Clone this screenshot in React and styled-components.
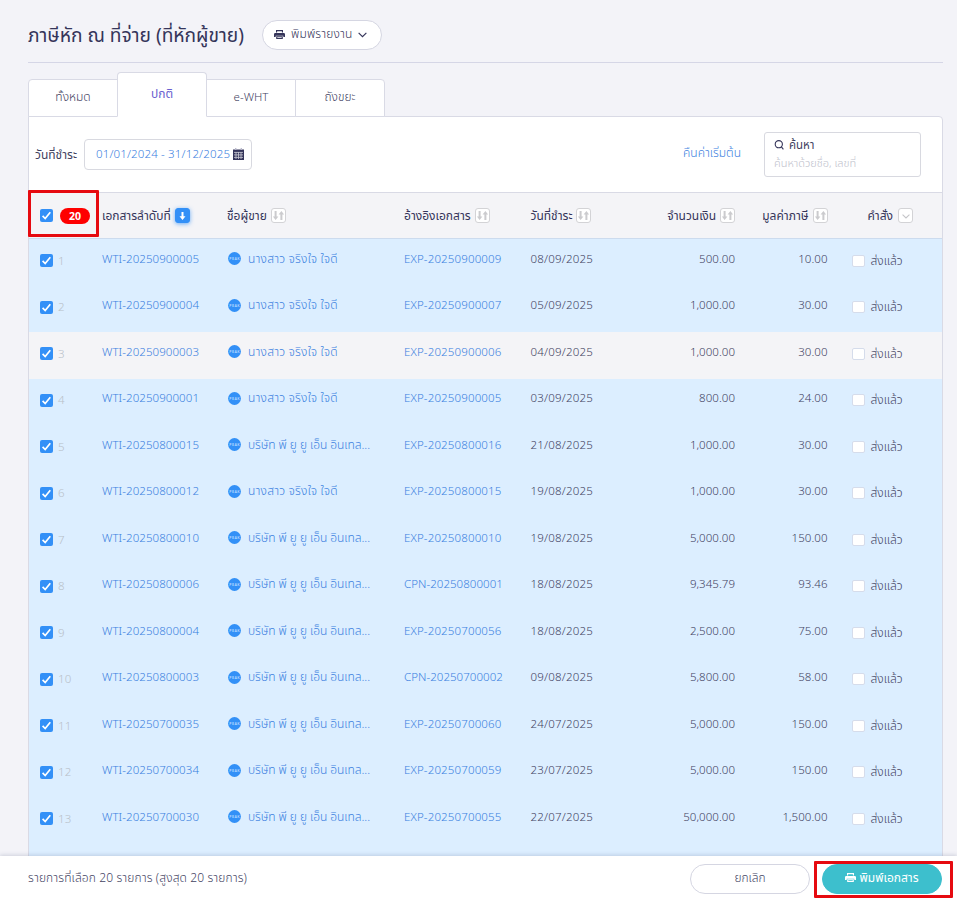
import React from 'react'
import styled, { createGlobalStyle } from 'styled-components'

const GlobalStyle = createGlobalStyle`
  * {
    box-sizing: border-box;
  }
  body {
    margin: 0;
    overflow: hidden;
    background: #f3f3f8;
    color: #42425f;
    font-family: 'Noto Sans', 'Noto Sans Thai', sans-serif;
    font-size: 12px;
    font-weight: 300;
  }
`

const Page = styled.div`
  position: relative;
  height: 898px;
  display: flex;
  flex-direction: column;
  overflow: hidden;
`

const Content = styled.main`
  flex: 1;
  min-height: 0;
  padding: 0 14px 0 28px;
  overflow: hidden;
`

const Header = styled.header`
  display: flex;
  align-items: center;
  gap: 18px;
  height: 63px;
  padding-top: 8px;
  border-bottom: 1px solid #d5d6e6;
`

const Title = styled.h1`
  width: 216px;
  margin: 0;
  font-size: 19.2px;
  font-weight: 400;
  line-height: 28px;
  white-space: nowrap;
  color: #35355a;
`

const Label = styled.span`
  flex: none;
  font-size: ${(p) => p.$size || 12}px;
  font-weight: ${(p) => p.$weight || 300};
  letter-spacing: ${(p) => p.$track || 0}px;
  color: ${(p) => p.$color || 'inherit'};
  line-height: 18px;
  white-space: nowrap;
`

const ReportButton = styled.button`
  display: flex;
  align-items: center;
  width: 120px;
  height: 30px;
  padding: 0 12px 2px 11px;
  gap: 6px;
  border: 1px solid #d5d6e2;
  border-radius: 15px;
  background: #fff;
  color: #35355a;
  font: inherit;
`

const Tabs = styled.nav`
  display: flex;
  align-items: flex-end;
  height: 54px;
  margin-bottom: -1px;
`

const Tab = styled.div`
  display: flex;
  align-items: center;
  justify-content: center;
  position: relative;
  width: 90px;
  height: ${(p) => (p.$active ? 45 : 38)}px;
  margin-left: ${(p) => (p.$first ? 0 : -1)}px;
  padding-bottom: 2px;
  border: 1px solid #d9dae5;
  border-bottom-color: ${(p) => (p.$active ? '#fff' : '#d9dae5')};
  border-radius: ${(p) => p.$radius || '0'};
  background: #fff;
  color: ${(p) => (p.$active ? '#6a5fd0' : '#42425f')};
  z-index: ${(p) => (p.$active ? 1 : 0)};
`

const Panel = styled.section`
  border: 1px solid #d9dae5;
  border-radius: 0 4px 0 0;
  background: #fff;
`

const Filters = styled.div`
  display: flex;
  align-items: center;
  height: 75px;
  padding: 0 21px 0 6px;
`

const DateField = styled.div`
  display: flex;
  align-items: center;
  justify-content: space-between;
  width: 168px;
  height: 31px;
  margin-left: 7px;
  padding: 0 7px 1px 11px;
  border: 1px solid #d8d9e0;
  border-radius: 4px;
`

const ResetLink = styled.a`
  margin-left: auto;
  padding-bottom: 3px;
  color: #3a80e0;
`

const SearchBox = styled.div`
  display: flex;
  flex-direction: column;
  width: 157px;
  height: 45px;
  margin-left: 23px;
  padding: 2px 9px;
  border: 1px solid #d8d9e0;
  border-radius: 3px;
`

const SearchTitle = styled.div`
  display: flex;
  align-items: center;
  gap: 4px;
  height: 19px;
`

const columns = '73px 125px 177px 126.5px 79.5px 125px 92.5px 1fr'

const HeadRow = styled.div`
  display: grid;
  grid-template-columns: ${columns};
  align-items: center;
  height: 47px;
  border-top: 1px solid #d9dae5;
  border-bottom: 1px solid #ccdbee;
  background: #f4f4f7;
  color: #35355a;
`

const HeadCell = styled.div`
  display: flex;
  align-items: center;
  justify-content: ${(p) => (p.$right ? 'flex-end' : 'flex-start')};
  gap: ${(p) => p.$gap || 4}px;
  padding-left: ${(p) => p.$pad || 0}px;
  white-space: nowrap;
`

const Row = styled.div`
  display: grid;
  grid-template-columns: ${columns};
  height: 46.5px;
  padding-top: 10.6px;
  background: ${(p) => (p.$hover ? '#f4f4f7' : '#dceeff')};
`

const Cell = styled.div`
  display: flex;
  align-items: center;
  justify-content: ${(p) => (p.$right ? 'flex-end' : 'flex-start')};
  height: 18px;
  margin-top: ${(p) => p.$drop || 0}px;
  padding-left: ${(p) => p.$pad || 0}px;
  gap: ${(p) => p.$gap || 0}px;
  white-space: nowrap;
  color: ${(p) => (p.$link ? '#3a80e0' : '#42425f')};
`

const CheckBox = styled.span`
  display: flex;
  align-items: center;
  justify-content: center;
  flex: none;
  width: 13px;
  height: 13px;
  border-radius: 2px;
  background: #3390f7;
`

const EmptyBox = styled.span`
  flex: none;
  width: 13px;
  height: 12px;
  border: 1px solid #d5dceb;
  border-radius: 2px;
  background: #fff;
`

const CountBadge = styled.span`
  width: 30px;
  height: 16px;
  margin-left: 3px;
  border-radius: 8px;
  background: #fe0000;
  color: #fff;
  font-size: 10.5px;
  font-weight: 700;
  line-height: 16px;
  text-align: center;
`

const SortBox = styled.span`
  display: flex;
  align-items: center;
  justify-content: center;
  flex: none;
  width: 15px;
  height: 15px;
  border: 1px solid ${(p) => (p.$active ? '#3390f7' : '#d3d3d6')};
  border-radius: 3px;
  background: ${(p) => (p.$active ? '#3390f7' : '#fff')};
  box-shadow: ${(p) => (p.$active ? '0 1px 4px rgba(51, 144, 247, 0.7)' : 'none')};
`

const Footer = styled.footer`
  position: relative;
  display: flex;
  align-items: center;
  flex: none;
  height: 42px;
  padding: 3px 15px 0 28px;
  background: #fff;
  box-shadow: 0 -1px 4px rgba(60, 70, 110, 0.2);
`

const FooterText = styled.div`
  padding-bottom: 2px;
`

const FooterButton = styled.button`
  display: flex;
  align-items: center;
  justify-content: center;
  gap: 3px;
  width: 120px;
  height: 30px;
  margin-left: ${(p) => (p.$primary ? '12px' : 'auto')};
  padding: 0 0 2px;
  border: 1px solid ${(p) => (p.$primary ? '#3dbfcd' : '#d5d6e2')};
  border-radius: 15px;
  background: ${(p) => (p.$primary ? '#3dbfcd' : '#fff')};
  color: ${(p) => (p.$primary ? '#fff' : '#42425f')};
  font: inherit;
`

const Highlight = styled.div`
  position: absolute;
  left: ${(p) => p.$x}px;
  top: ${(p) => p.$y}px;
  width: ${(p) => p.$w}px;
  height: ${(p) => p.$h}px;
  border: 3px solid #e60a10;
  border-radius: 1px;
  pointer-events: none;
`

const Tick = () => (
  <CheckBox>
    <svg width="11" height="11" viewBox="0 0 11 11" fill="none" stroke="#fff" strokeWidth="1.7">
      <path d="M1.6 5.9 4.2 8.5 9.3 2.3" />
    </svg>
  </CheckBox>
)

const Printer = () => (
  <svg width="11" height="11" viewBox="0 0 11 11" fill="currentColor">
    <path d="M2 1h7v2.4H7.9V2.2H3.1v1.2H2zM1.3 4h8.4A1.3 1.3 0 0 1 11 5.3V8H9.3V6.8H1.7V8H0V5.3A1.3 1.3 0 0 1 1.3 4z" />
    <path fillRule="evenodd" d="M2.2 7.3h6.6V10H2.2zM3.3 8.2v.8h4.4v-.8z" />
  </svg>
)

const Chevron = ({ size = 9, color = 'currentColor' }) => (
  <svg width={size} height={size} viewBox="0 0 10 10" fill="none" stroke={color} strokeWidth="1.3">
    <path d="M.7 3.2 5 7.4l4.3-4.2" />
  </svg>
)

const Calendar = () => (
  <svg width="11" height="12" viewBox="0 0 11 12">
    <path fill="#35355a" d="M0 1.5h11V12H0z" />
    <path fill="#b9b9cc" d="M2 0h1.4v2H2zM7.6 0H9v2H7.6z" />
    <path stroke="#fff" strokeWidth=".8" d="M1 4.4h9M1 6.9h9M1 9.4h9M3 4v7M5.5 4v7M8 4v7" opacity=".75" />
  </svg>
)

const Search = () => (
  <svg width="11" height="11" viewBox="0 0 11 11" fill="none" stroke="#35355a" strokeWidth="1.1">
    <circle cx="4.8" cy="5.2" r="3.6" />
    <path d="M7.2 7.7 9.4 10.4" />
  </svg>
)

const Sort = () => (
  <SortBox>
    <svg width="13" height="13" viewBox="0 0 13 13" fill="#cbcbce">
      <path d="M2.6 2h2v5.6h1.8L3.6 11 .9 7.6h1.7zM8.4 11h2V5.4h1.7L9.4 2 6.6 5.4h1.8z" />
    </svg>
  </SortBox>
)

const SortDown = () => (
  <SortBox $active>
    <svg width="9" height="10" viewBox="0 0 9 10" fill="#fff">
      <path d="M3.5 1h2v4.3h2L4.5 9l-3-3.7h2z" />
    </svg>
  </SortBox>
)

const PeakLogo = () => (
  <svg width="13" height="13" viewBox="0 0 13 13">
    <circle cx="6.5" cy="6.5" r="6.4" fill="#3390f7" />
    <text
      x="6.7"
      y="7.8"
      fill="#b9dbff"
      fontFamily="Noto Sans"
      fontSize="3.6"
      fontWeight="600"
      letterSpacing=".5"
      textAnchor="middle"
    >
      PEAK
    </text>
  </svg>
)

const PERSON = 'นางสาว จริงใจ ใจดี'
const COMPANY = 'บริษัท พี ยู ยู เอ็น อินเทล...'

const rows = [
  ['WTI-20250900005', PERSON, 'EXP-20250900009', '08/09/2025', '500.00', '10.00'],
  ['WTI-20250900004', PERSON, 'EXP-20250900007', '05/09/2025', '1,000.00', '30.00'],
  ['WTI-20250900003', PERSON, 'EXP-20250900006', '04/09/2025', '1,000.00', '30.00'],
  ['WTI-20250900001', PERSON, 'EXP-20250900005', '03/09/2025', '800.00', '24.00'],
  ['WTI-20250800015', COMPANY, 'EXP-20250800016', '21/08/2025', '1,000.00', '30.00'],
  ['WTI-20250800012', PERSON, 'EXP-20250800015', '19/08/2025', '1,000.00', '30.00'],
  ['WTI-20250800010', COMPANY, 'EXP-20250800010', '19/08/2025', '5,000.00', '150.00'],
  ['WTI-20250800006', COMPANY, 'CPN-20250800001', '18/08/2025', '9,345.79', '93.46'],
  ['WTI-20250800004', COMPANY, 'EXP-20250700056', '18/08/2025', '2,500.00', '75.00'],
  ['WTI-20250800003', COMPANY, 'CPN-20250700002', '09/08/2025', '5,800.00', '58.00'],
  ['WTI-20250700035', COMPANY, 'EXP-20250700060', '24/07/2025', '5,000.00', '150.00'],
  ['WTI-20250700034', COMPANY, 'EXP-20250700059', '23/07/2025', '5,000.00', '150.00'],
  ['WTI-20250700030', COMPANY, 'EXP-20250700055', '22/07/2025', '50,000.00', '1,500.00'],
]

const App = () => {
  return (
    <Page>
      <GlobalStyle />
      <Content>
        <Header>
          <Title>ภาษีหัก ณ ที่จ่าย (ที่หักผู้ขาย)</Title>
          <ReportButton>
            <Printer />
            <Label $track={0.15}>พิมพ์รายงาน</Label>
            <Chevron />
          </ReportButton>
        </Header>
        <Tabs>
          <Tab $first $radius="4px 0 0 0">
            <Label>ทั้งหมด</Label>
          </Tab>
          <Tab $active $radius="4px 4px 0 0">
            <Label $weight={400}>ปกติ</Label>
          </Tab>
          <Tab>
            <Label $size={11.5}>e-WHT</Label>
          </Tab>
          <Tab $radius="0 4px 0 0">
            <Label>ถังขยะ</Label>
          </Tab>
        </Tabs>
        <Panel>
          <Filters>
            <Label $weight={400}>วันที่ชำระ</Label>
            <DateField>
              <Label $color="#3a80e0" $size={11.5} $track={0.15}>
                01/01/2024 - 31/12/2025
              </Label>
              <Calendar />
            </DateField>
            <ResetLink>
              <Label>คืนค่าเริ่มต้น</Label>
            </ResetLink>
            <SearchBox>
              <SearchTitle>
                <Search />
                <Label $weight={400} $size={11.5}>
                  ค้นหา
                </Label>
              </SearchTitle>
              <Label $color="#c0c1cc" $size={11}>
                ค้นหาด้วยชื่อ, เลขที่
              </Label>
            </SearchBox>
          </Filters>
          <HeadRow>
            <HeadCell $pad={11}>
              <Tick />
              <CountBadge>20</CountBadge>
            </HeadCell>
            <HeadCell>
              <Label $weight={400}>เอกสารลำดับที่</Label>
              <SortDown />
            </HeadCell>
            <HeadCell>
              <Label $weight={400}>ชื่อผู้ขาย</Label>
              <Sort />
            </HeadCell>
            <HeadCell>
              <Label $weight={400}>อ้างอิงเอกสาร</Label>
              <Sort />
            </HeadCell>
            <HeadCell>
              <Label $weight={400}>วันที่ชำระ</Label>
              <Sort />
            </HeadCell>
            <HeadCell $right>
              <Label $weight={400}>จำนวนเงิน</Label>
              <Sort />
            </HeadCell>
            <HeadCell $right>
              <Label $weight={400}>มูลค่าภาษี</Label>
              <Sort />
            </HeadCell>
            <HeadCell $pad={40} $gap={5}>
              <Label $weight={400}>คำสั่ง</Label>
              <SortBox>
                <Chevron size={8} color="#c4c4c8" />
              </SortBox>
            </HeadCell>
          </HeadRow>
          {rows.map(([doc, vendor, ref, date, amount, tax], i) => (
            <Row key={doc} $hover={i === 2}>
              <Cell $pad={11} $gap={5} $drop={2.4}>
                <Tick />
                <Label $color="#b8c0c8" $size={11.5} $track={0.3}>
                  {i + 1}
                </Label>
              </Cell>
              <Cell $link>
                <Label $size={11.5} $track={0.07}>
                  {doc}
                </Label>
              </Cell>
              <Cell $link $gap={7} $pad={1}>
                <PeakLogo />
                <Label $track={vendor === PERSON ? 0.2 : -0.07}>{vendor}</Label>
              </Cell>
              <Cell $link>
                <Label $size={11.5} $track={ref.startsWith('CPN') ? 0.04 : 0.14}>
                  {ref}
                </Label>
              </Cell>
              <Cell>
                <Label $size={11.5} $track={0.2}>
                  {date}
                </Label>
              </Cell>
              <Cell $right>
                <Label $size={11.5} $track={0.04}>
                  {amount}
                </Label>
              </Cell>
              <Cell $right>
                <Label $size={11.5} $track={0.04}>
                  {tax}
                </Label>
              </Cell>
              <Cell $pad={24} $gap={6} $drop={2.4}>
                <EmptyBox />
                <Label>ส่งแล้ว</Label>
              </Cell>
            </Row>
          ))}
          <Row />
        </Panel>
      </Content>
      <Footer>
        <FooterText>
          <Label $track={0.12}>รายการที่เลือก 20 รายการ (สูงสุด 20 รายการ)</Label>
        </FooterText>
        <FooterButton>
          <Label>ยกเลิก</Label>
        </FooterButton>
        <FooterButton $primary>
          <Printer />
          <Label $weight={400}>พิมพ์เอกสาร</Label>
        </FooterButton>
      </Footer>
      <Highlight $x={28} $y={190} $w={71} $h={47} />
      <Highlight $x={814} $y={861} $w={139} $h={37} />
    </Page>
  )
}

export default App
